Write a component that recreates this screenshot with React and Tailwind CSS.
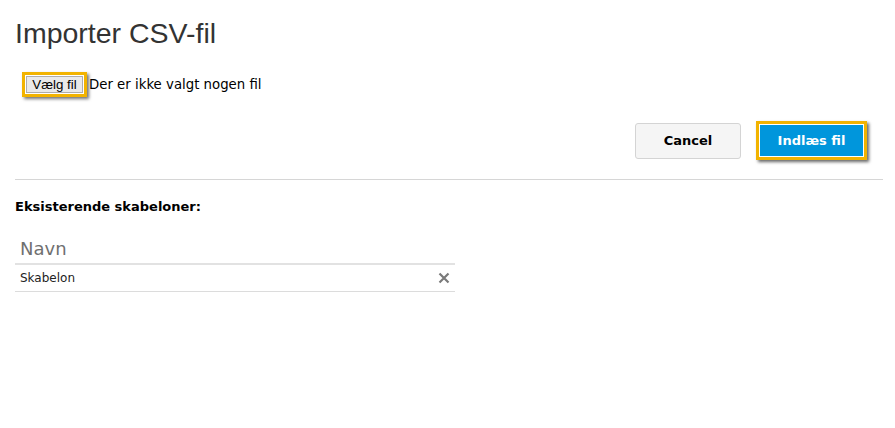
export default function App() {
  const verdana = { fontFamily: '"DejaVu Sans", Verdana, sans-serif' };
  return (
    <div className="w-[895px] h-[428px] bg-white pl-[15px] pr-[12px] text-[#222]" style={verdana}>
      <h1 className="pt-[15px] text-[28.5px] leading-[36px] text-[#333] font-normal" style={{ fontFamily: '"Liberation Sans", Arial, sans-serif' }}>
        Importer CSV-fil
      </h1>
      <div className="mt-[21px] flex items-center pl-[7px]">
        <div className="border-[3px] border-[#f2b300] shadow-[2px_2px_3px_rgba(0,0,0,0.55)] p-[1px]">
          <div className="bg-[#e9e9e9] border border-[#adadad] w-[57px] h-[17px] flex items-center justify-center text-[13.3px] text-black" style={{ fontFamily: '"Liberation Sans", Arial, sans-serif' }}>
            Vælg fil
          </div>
        </div>
        <span className="ml-[2px] text-[13.3px] text-black">Der er ikke valgt nogen fil</span>
      </div>
      <div className="mt-[24px] flex justify-end items-center gap-[15px] pr-[16px]">
        <button className="w-[106px] h-[36px] rounded-[3px] border border-[#d4d4d4] bg-[#f5f5f5] text-[13px] font-bold text-black" style={verdana}>
          Cancel
        </button>
        <div className="border-[3px] border-[#f2b300] shadow-[2px_2px_3px_rgba(0,0,0,0.6)] p-[1px]">
          <button className="w-[103px] h-[31px] bg-[#0096dc] text-[13px] font-bold text-white" style={verdana}>
            Indlæs fil
          </button>
        </div>
      </div>
      <div className="mt-[19px] border-t border-[#d6d6d6]" />
      <div className="mt-[17px] text-[13px] font-bold text-black">Eksisterende skabeloner:</div>
      <div className="mt-[17px] w-[440px]">
        <div className="h-[31px] flex items-center pl-[5px] text-[18px] text-[#707070] border-b-2 border-[#e2e2e2]">Navn</div>
        <div className="h-[27px] flex items-center justify-between pl-[5px] pr-[4px] text-[12px] text-[#222] border-b border-[#dcdcdc]">
          <span>Skabelon</span>
          <svg width="12" height="12" viewBox="0 0 12 12" className="mr-[1px]">
            <path d="M1.5 1.5 L10.5 10.5 M10.5 1.5 L1.5 10.5" stroke="#7a7a7a" strokeWidth="2.2" />
          </svg>
        </div>
      </div>
    </div>
  );
}
